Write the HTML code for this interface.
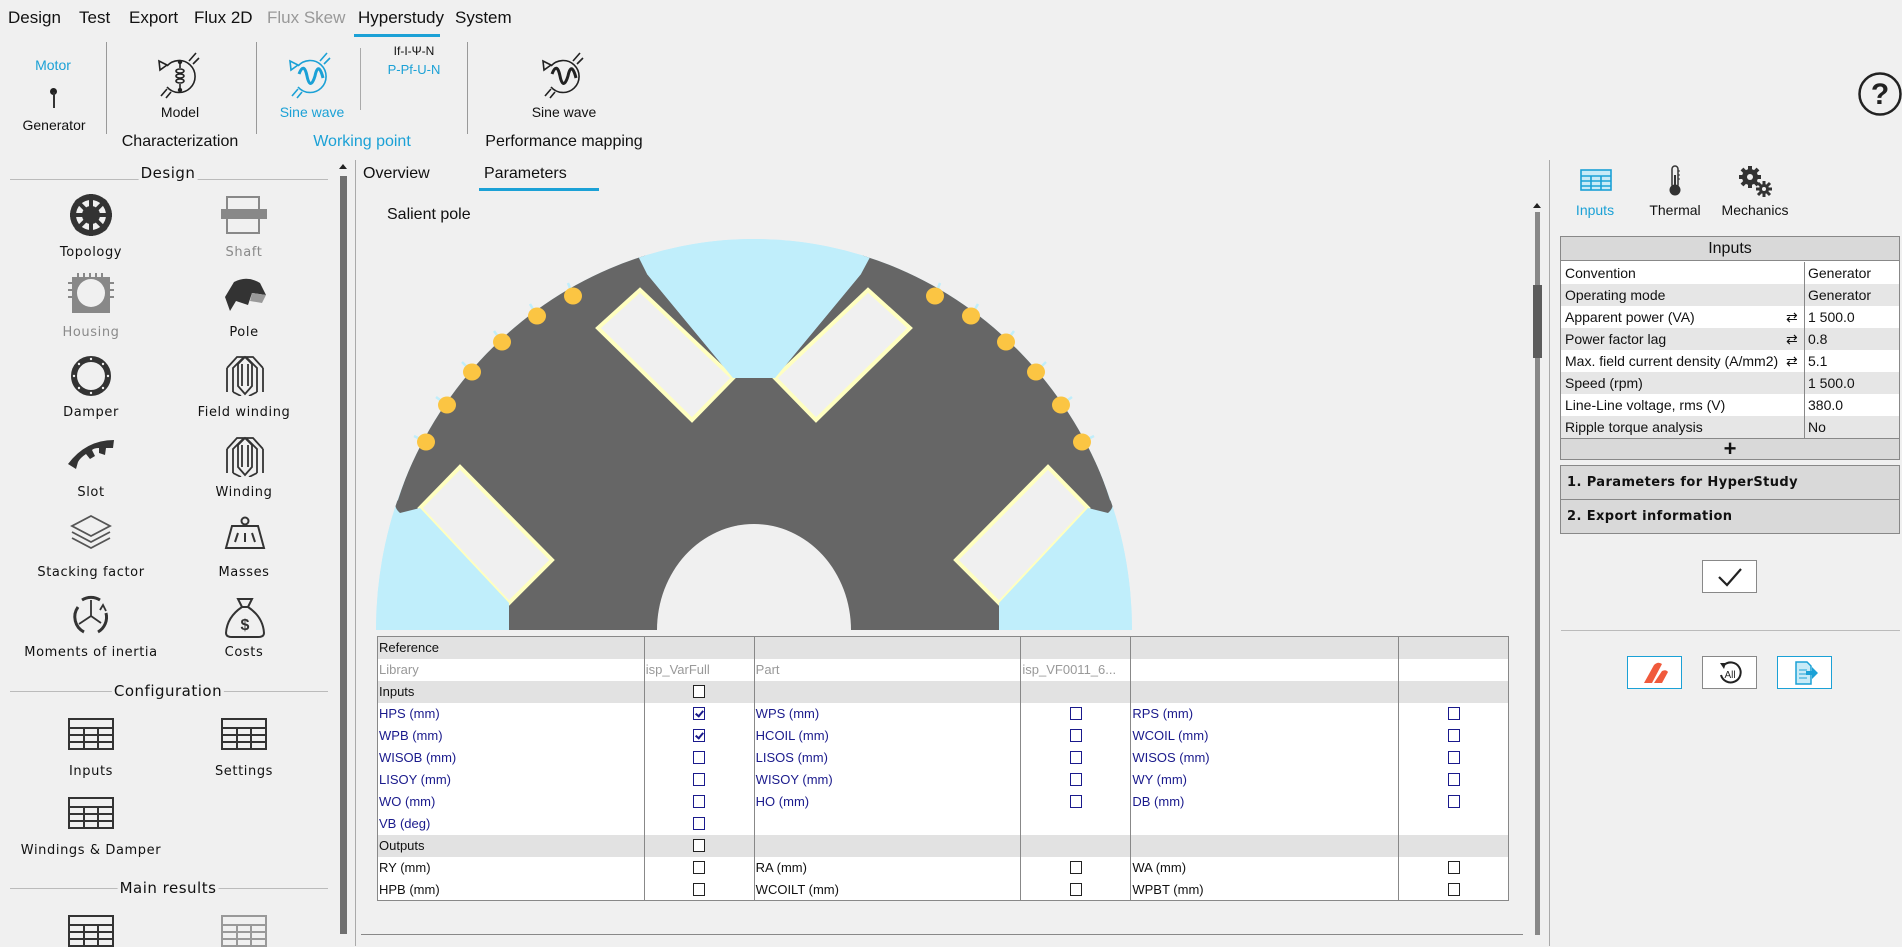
<!DOCTYPE html>
<html><head><meta charset="utf-8">
<style>
*{margin:0;padding:0;box-sizing:border-box}
body{width:1902px;height:946px;background:#f0f0f0;position:relative;overflow:hidden;font-family:"Liberation Sans",sans-serif;color:#111}
.a{position:absolute;white-space:nowrap}
.m{font-size:17px;top:8px}
.c{transform:translateX(-50%)}
.lp{font-family:"DejaVu Sans",sans-serif;font-size:13px;letter-spacing:0.6px;transform:translateX(-50%)}
.hd{font-family:"DejaVu Sans",sans-serif;font-size:15px;letter-spacing:0.5px;transform:translateX(-50%);background:#f0f0f0;padding:0 2px}
.blue{color:#1ba1d6}
.gray{color:#8a8a8a}
table{border-collapse:collapse}
#pt{position:absolute;left:377px;top:636px;width:1132px;font-size:13px;border:1px solid #888}
#pt td{height:22px;padding:0 1px;border-left:1px solid #888;border-right:1px solid #888;vertical-align:middle}
#pt tr.g td{background:#e2e2e2}
#pt tr.w td{background:#fff}
.b{color:#1a1a8c}
.cb{display:block;margin:0 auto;width:12px;height:13px;border:1px solid #1a1a8c;background:#fff;position:relative}
.cb.k{border-color:#222}
.cb.v::after{content:"";position:absolute;left:3px;top:1px;width:3px;height:6px;border-right:2px solid #1a1a8c;border-bottom:2px solid #1a1a8c;transform:rotate(40deg)}
.rr{position:absolute;left:1561px;width:338px;height:22px;font-size:14px;line-height:22px}
.rr span{position:absolute;left:4px}
.rr i{position:absolute;left:243px;top:0;bottom:0;border-left:1px solid #888;padding-left:3px;font-style:normal}
.rr b{position:absolute;left:225px;font-weight:normal}
</style></head><body>

<div class="a m" style="left:8px">Design</div>
<div class="a m" style="left:79px">Test</div>
<div class="a m" style="left:129px">Export</div>
<div class="a m" style="left:194px">Flux 2D</div>
<div class="a m" style="left:267px;color:#999">Flux Skew</div>
<div class="a m" style="left:358px">Hyperstudy</div>
<div class="a m" style="left:455px">System</div>
<div class="a" style="left:354px;top:34px;width:86px;height:3px;background:#1ba1d6"></div>

<div class="a blue c" style="left:53px;top:57px;font-size:14px">Motor</div>
<div class="a" style="left:50px;top:88px;width:7px;height:7px;border-radius:50%;background:#222"></div>
<div class="a" style="left:53px;top:92px;width:1.5px;height:16px;background:#333"></div>
<div class="a c" style="left:54px;top:117px;font-size:14px">Generator</div>
<div class="a" style="left:106px;top:42px;width:1px;height:92px;background:#999"></div>

<svg class="a" style="left:155px;top:50px" width="50" height="50" viewBox="0 0 50 50" fill="none" stroke="#222" stroke-width="1.6">
<path d="M12 16 A16 16 0 1 1 12 37"/><path d="M4 11 L12 15 L5 20 Z"/><path d="M34 11 L41 3 M38 14 L44 8 M12 39 L6 46 M16 42 L11 48"/>
<path d="M25 12 V18 M25 34 V40"/><ellipse cx="25" cy="21" rx="4" ry="2"/><ellipse cx="25" cy="26" rx="4" ry="2"/><ellipse cx="25" cy="31" rx="4" ry="2"/>
<circle cx="25" cy="12" r="1.4" fill="#222"/><circle cx="25" cy="40" r="1.4" fill="#222"/></svg>
<div class="a c" style="left:180px;top:104px;font-size:14px">Model</div>
<div class="a c" style="left:180px;top:133px;font-size:16px">Characterization</div>
<div class="a" style="left:256px;top:42px;width:1px;height:92px;background:#999"></div>

<svg class="a" style="left:286px;top:50px" width="50" height="50" viewBox="0 0 50 50" fill="none" stroke="#1ba1d6" stroke-width="1.6">
<path d="M12 16 A16 16 0 1 1 12 37"/><path d="M4 11 L12 15 L5 20 Z"/><path d="M34 11 L41 3 M38 14 L44 8 M12 39 L6 46 M16 42 L11 48"/>
<path d="M13 24 C16 16 19 16 21 26 C23 36 26 36 29 26 C31 16 34 16 37 28" stroke-width="3"/></svg>
<div class="a c blue" style="left:312px;top:104px;font-size:14px">Sine wave</div>
<div class="a" style="left:360px;top:48px;width:1px;height:62px;background:#aaa"></div>
<div class="a c" style="left:414px;top:44px;font-size:12px">If-I-Ψ-N</div>
<div class="a c blue" style="left:414px;top:62px;font-size:13px">P-Pf-U-N</div>
<div class="a c blue" style="left:362px;top:133px;font-size:16px">Working point</div>
<div class="a" style="left:467px;top:42px;width:1px;height:92px;background:#999"></div>

<svg class="a" style="left:539px;top:50px" width="50" height="50" viewBox="0 0 50 50" fill="none" stroke="#222" stroke-width="1.6">
<path d="M12 16 A16 16 0 1 1 12 37"/><path d="M4 11 L12 15 L5 20 Z"/><path d="M34 11 L41 3 M38 14 L44 8 M12 39 L6 46 M16 42 L11 48"/>
<path d="M13 24 C16 16 19 16 21 26 C23 36 26 36 29 26 C31 16 34 16 37 28" stroke-width="3"/></svg>
<div class="a c" style="left:564px;top:104px;font-size:14px">Sine wave</div>
<div class="a c" style="left:564px;top:133px;font-size:16px">Performance mapping</div>

<svg class="a" style="left:1857px;top:71px" width="46" height="46" viewBox="0 0 46 46"><circle cx="23" cy="23" r="20.5" fill="none" stroke="#222" stroke-width="2.5"/><text x="23" y="33" text-anchor="middle" font-family="Liberation Sans" font-weight="bold" font-size="30" fill="#222">?</text></svg>

<div class="a" style="left:10px;top:179px;width:318px;height:1px;background:#bbb"></div>
<div class="a hd" style="left:168px;top:164px">Design</div>
<div class="a" style="left:340px;top:176px;width:7px;height:758px;background:#707070"></div>
<div class="a" style="left:339px;top:164px;width:0;height:0;border-left:4px solid transparent;border-right:4px solid transparent;border-bottom:5px solid #222"></div>

<svg class="a" style="left:68px;top:192px" width="46" height="46" viewBox="0 0 46 46"><circle cx="23" cy="23" r="21" fill="#333"/><circle cx="23" cy="23" r="15" fill="#f0f0f0"/><g stroke="#333" stroke-width="4"><path d="M23 2V44M2 23H44M8 8L38 38M38 8L8 38"/></g><circle cx="23" cy="23" r="9" fill="#333"/></svg>
<div class="a lp" style="left:91px;top:245px">Topology</div>
<svg class="a" style="left:221px;top:195px" width="46" height="40" viewBox="0 0 46 40"><rect x="6" y="2" width="32" height="36" fill="none" stroke="#888" stroke-width="2"/><rect x="0" y="14" width="46" height="10" fill="#888"/></svg>
<div class="a lp gray" style="left:244px;top:245px">Shaft</div>

<svg class="a" style="left:68px;top:273px" width="46" height="44" viewBox="0 0 46 44"><rect x="4" y="4" width="38" height="36" fill="#888"/><circle cx="23" cy="20" r="14" fill="#f0f0f0"/><rect x="8" y="34" width="30" height="6" fill="#888"/><g stroke="#888" stroke-width="2"><path d="M10 0V4M16 0V4M22 0V4M28 0V4M34 0V4M0 10H4M0 17H4M0 24H4M42 10H46M42 17H46M42 24H46"/></g></svg>
<div class="a lp gray" style="left:91px;top:325px">Housing</div>
<svg class="a" style="left:222px;top:277px" width="46" height="40" viewBox="0 0 46 40"><path d="M3 20 L12 5 Q25 -2 38 6 L44 18 L30 16 L26 28 L14 24 L8 34 Z" fill="#333"/><path d="M30 16 L44 18 L40 26 L28 24Z" fill="#999"/></svg>
<div class="a lp" style="left:244px;top:325px">Pole</div>

<svg class="a" style="left:70px;top:355px" width="42" height="42" viewBox="0 0 42 42"><circle cx="21" cy="21" r="17" fill="none" stroke="#333" stroke-width="6"/><g fill="#f0f0f0"><circle cx="21" cy="4" r="1.2"/><circle cx="21" cy="38" r="1.2"/><circle cx="4" cy="21" r="1.2"/><circle cx="38" cy="21" r="1.2"/><circle cx="9" cy="9" r="1.2"/><circle cx="33" cy="33" r="1.2"/><circle cx="33" cy="9" r="1.2"/><circle cx="9" cy="33" r="1.2"/></g></svg>
<div class="a lp" style="left:91px;top:405px">Damper</div>
<svg class="a" style="left:224px;top:354px" width="42" height="42" viewBox="0 0 42 42" fill="none" stroke="#333" stroke-width="1.8"><path d="M3 14 L13 3 L20 3 L9 14 V38 M39 14 L29 3 L22 3 L33 14 V38 M9 38 L17 42 M33 38 L25 42"/><path d="M14 10 L21 3 L28 10 V32 L21 40 L14 32Z M18 10 V32 M24 10 V32"/><path d="M3 14 V38"/><path d="M39 14 V38"/></svg>
<div class="a lp" style="left:244px;top:405px">Field winding</div>

<svg class="a" style="left:68px;top:436px" width="46" height="36" viewBox="0 0 46 36"><path d="M0 28 Q18 4 46 4 L45 12 L38 12 L37 19 L31 17 L31 12 Q26 12 24 14 L27 20 L22 23 L18 18 Q12 22 10 26 L8 33 Z" fill="#333"/></svg>
<div class="a lp" style="left:91px;top:485px">Slot</div>
<svg class="a" style="left:224px;top:435px" width="42" height="42" viewBox="0 0 42 42" fill="none" stroke="#333" stroke-width="1.8"><path d="M3 14 L13 3 L20 3 L9 14 V38 M39 14 L29 3 L22 3 L33 14 V38 M9 38 L17 42 M33 38 L25 42"/><path d="M14 10 L21 3 L28 10 V32 L21 40 L14 32Z M18 10 V32 M24 10 V32"/><path d="M3 14 V38"/><path d="M39 14 V38"/></svg>
<div class="a lp" style="left:244px;top:485px">Winding</div>

<svg class="a" style="left:70px;top:514px" width="42" height="40" viewBox="0 0 42 40" fill="none" stroke="#555" stroke-width="1.8"><path d="M21 2 L40 12 L21 22 L2 12Z"/><path d="M2 18 L21 28 L40 18"/><path d="M2 24 L21 34 L40 24"/></svg>
<div class="a lp" style="left:91px;top:565px">Stacking factor</div>
<svg class="a" style="left:224px;top:516px" width="42" height="36" viewBox="0 0 42 36" fill="none" stroke="#333" stroke-width="2"><circle cx="21" cy="5" r="3.5"/><path d="M8 10 H34 L40 32 H2Z M14 17 L11 26 M21 17 V26 M28 17 L31 26"/></svg>
<div class="a lp" style="left:244px;top:565px">Masses</div>

<svg class="a" style="left:70px;top:595px" width="42" height="42" viewBox="0 0 42 42" fill="none" stroke="#333" stroke-width="3"><path d="M8 12 A17 17 0 0 0 14 37"/><path d="M28 37 A17 17 0 0 0 36 18"/><path d="M12 5 A17 17 0 0 1 30 5"/><path d="M21 5 V21 L9 29 M21 21 L31 28" stroke-width="1.8"/><path d="M30 15 L33 10 L36 16" stroke-width="1.8"/></svg>
<div class="a lp" style="left:91px;top:645px">Moments of inertia</div>
<svg class="a" style="left:224px;top:595px" width="42" height="44" viewBox="0 0 42 44" fill="none" stroke="#333" stroke-width="2"><path d="M14 4 H28 L24 12 H18Z"/><path d="M18 12 Q3 22 2 38 Q2 42 8 42 H34 Q40 42 40 38 Q39 22 24 12"/><text x="21" y="35" text-anchor="middle" font-family="Liberation Sans" font-weight="bold" font-size="16" fill="#333" stroke="none">$</text></svg>
<div class="a lp" style="left:244px;top:645px">Costs</div>

<div class="a" style="left:10px;top:691px;width:318px;height:1px;background:#bbb"></div>
<div class="a hd" style="left:168px;top:682px">Configuration</div>
<svg class="a" style="left:68px;top:718px" width="46" height="32" viewBox="0 0 46 32" fill="none" stroke="#333" stroke-width="2"><rect x="1" y="1" width="44" height="30"/><path d="M1 10H45M1 17H45M1 24H45M16 10V31M30 10V31"/></svg>
<div class="a lp" style="left:91px;top:764px">Inputs</div>
<svg class="a" style="left:221px;top:718px" width="46" height="32" viewBox="0 0 46 32" fill="none" stroke="#333" stroke-width="2"><rect x="1" y="1" width="44" height="30"/><path d="M1 10H45M1 17H45M1 24H45M16 10V31M30 10V31"/></svg>
<div class="a lp" style="left:244px;top:764px">Settings</div>
<svg class="a" style="left:68px;top:797px" width="46" height="32" viewBox="0 0 46 32" fill="none" stroke="#333" stroke-width="2"><rect x="1" y="1" width="44" height="30"/><path d="M1 10H45M1 17H45M1 24H45M16 10V31M30 10V31"/></svg>
<div class="a lp" style="left:91px;top:843px">Windings &amp; Damper</div>
<div class="a" style="left:10px;top:888px;width:318px;height:1px;background:#bbb"></div>
<div class="a hd" style="left:168px;top:879px">Main results</div>
<svg class="a" style="left:68px;top:915px" width="46" height="32" viewBox="0 0 46 32" fill="none" stroke="#333" stroke-width="2"><rect x="1" y="1" width="44" height="30"/><path d="M1 10H45M1 17H45M1 24H45M16 10V31M30 10V31"/></svg>
<svg class="a" style="left:221px;top:915px" width="46" height="32" viewBox="0 0 46 32" fill="none" stroke="#999" stroke-width="2"><rect x="1" y="1" width="44" height="30"/><path d="M1 10H45M1 17H45M1 24H45M16 10V31M30 10V31"/></svg>

<div class="a" style="left:355px;top:160px;width:1px;height:786px;background:#aaa"></div>
<div class="a" style="left:363px;top:165px;font-size:16px">Overview</div>
<div class="a" style="left:484px;top:165px;font-size:16px">Parameters</div>
<div class="a" style="left:479px;top:188px;width:120px;height:3px;background:#1ba1d6"></div>
<div class="a" style="left:387px;top:206px;font-size:16px">Salient pole</div>

<svg class="a" style="left:370px;top:190px" width="780" height="450" viewBox="0 0 780 450">
<defs><clipPath id="e"><path d="M6 440 A378 391 0 0 1 762 440Z"/></clipPath></defs>
<path d="M6 440 A378 391 0 0 1 762 440Z" fill="#c0eefb"/>
<g clip-path="url(#e)">
<path d="M139 440 V413 L50 318 Q40 330 30 323 Q22 316 28 310 A376 402 0 0 1 262 60 Q284 62 277 84 L363 188 H405 L491 84 Q484 62 506 60 A376 402 0 0 1 740 310 Q746 316 738 323 Q728 330 718 318 L629 413 V440Z" fill="#666"/>
</g>
<g fill="#f0f0f0" stroke="#ffffc0" stroke-width="4">
<path d="M270 100 L228 138 L322 230 L363 188Z"/><path d="M498 100 L540 138 L446 230 L405 188Z"/>
<path d="M50 318 L90 277 L182 370 L139 413Z"/><path d="M718 318 L678 277 L586 370 L629 413Z"/></g>
<g clip-path="url(#e)" fill="#c0eefb">
<path d="M277 84 L363 188 H405 L491 84 L520 30 L250 30Z"/>
<path d="M50 318 L139 413 V442 H0 V330 L30 323Z"/>
<path d="M718 318 L629 413 V442 H770 V330 L738 323Z"/>
</g>
<ellipse cx="384" cy="440" rx="97" ry="106" fill="#f0f0f0"/>
<rect x="0" y="440" width="780" height="10" fill="#f0f0f0"/>
<g stroke="#c0eefb" stroke-width="2.5"><path d="M203 106 L198 93 M167 126 L160 114 M132 152 L124 141 M102 182 L92 172 M77 215 L66 207 M56 252 L44 246 M565 106 L570 93 M601 126 L608 114 M636 152 L644 141 M666 182 L676 172 M691 215 L702 207 M712 252 L724 246"/></g>
<g fill="#fbc543"><ellipse cx="203" cy="106" rx="9" ry="8.5"/><ellipse cx="167" cy="126" rx="9" ry="8.5"/><ellipse cx="132" cy="152" rx="9" ry="8.5"/><ellipse cx="102" cy="182" rx="9" ry="8.5"/><ellipse cx="77" cy="215" rx="9" ry="8.5"/><ellipse cx="56" cy="252" rx="9" ry="8.5"/>
<ellipse cx="565" cy="106" rx="9" ry="8.5"/><ellipse cx="601" cy="126" rx="9" ry="8.5"/><ellipse cx="636" cy="152" rx="9" ry="8.5"/><ellipse cx="666" cy="182" rx="9" ry="8.5"/><ellipse cx="691" cy="215" rx="9" ry="8.5"/><ellipse cx="712" cy="252" rx="9" ry="8.5"/></g>
</svg>

<table id="pt">
<colgroup><col style="width:267px"><col style="width:110px"><col style="width:267px"><col style="width:110px"><col style="width:268px"><col style="width:110px"></colgroup>
<tr class="g"><td>Reference</td><td></td><td></td><td></td><td></td><td></td></tr>
<tr class="w" style="color:#999"><td>Library</td><td>isp_VarFull</td><td>Part</td><td>isp_VF0011_6...</td><td></td><td></td></tr>
<tr class="g"><td>Inputs</td><td><span class="cb k"></span></td><td></td><td></td><td></td><td></td></tr>
<tr class="w b"><td>HPS (mm)</td><td><span class="cb v"></span></td><td>WPS (mm)</td><td><span class="cb"></span></td><td>RPS (mm)</td><td><span class="cb"></span></td></tr>
<tr class="w b"><td>WPB (mm)</td><td><span class="cb v"></span></td><td>HCOIL (mm)</td><td><span class="cb"></span></td><td>WCOIL (mm)</td><td><span class="cb"></span></td></tr>
<tr class="w b"><td>WISOB (mm)</td><td><span class="cb"></span></td><td>LISOS (mm)</td><td><span class="cb"></span></td><td>WISOS (mm)</td><td><span class="cb"></span></td></tr>
<tr class="w b"><td>LISOY (mm)</td><td><span class="cb"></span></td><td>WISOY (mm)</td><td><span class="cb"></span></td><td>WY (mm)</td><td><span class="cb"></span></td></tr>
<tr class="w b"><td>WO (mm)</td><td><span class="cb"></span></td><td>HO (mm)</td><td><span class="cb"></span></td><td>DB (mm)</td><td><span class="cb"></span></td></tr>
<tr class="w b"><td>VB (deg)</td><td><span class="cb"></span></td><td></td><td></td><td></td><td></td></tr>
<tr class="g"><td>Outputs</td><td><span class="cb k"></span></td><td></td><td></td><td></td><td></td></tr>
<tr class="w"><td>RY (mm)</td><td><span class="cb k"></span></td><td>RA (mm)</td><td><span class="cb k"></span></td><td>WA (mm)</td><td><span class="cb k"></span></td></tr>
<tr class="w"><td>HPB (mm)</td><td><span class="cb k"></span></td><td>WCOILT (mm)</td><td><span class="cb k"></span></td><td>WPBT (mm)</td><td><span class="cb k"></span></td></tr>
</table>
<div class="a" style="left:361px;top:934px;width:1162px;height:1px;background:#888"></div>

<div class="a" style="left:1535px;top:212px;width:5px;height:723px;background:#888"></div>
<div class="a" style="left:1533px;top:285px;width:9px;height:73px;background:#5c5c5c"></div>
<div class="a" style="left:1533px;top:203px;border-left:4px solid transparent;border-right:4px solid transparent;border-bottom:5px solid #222"></div>
<div class="a" style="left:1549px;top:160px;width:1px;height:786px;background:#aaa"></div>

<svg class="a" style="left:1580px;top:169px" width="32" height="22" viewBox="0 0 32 22" fill="#c8ebf7" stroke="#1ba1d6" stroke-width="1.6"><rect x="1" y="1" width="30" height="20"/><path d="M1 7H31M1 12H31M1 17H31M11 7V21M21 7V21" fill="none"/></svg>
<div class="a c blue" style="left:1595px;top:202px;font-size:14px">Inputs</div>
<svg class="a" style="left:1667px;top:165px" width="16" height="32" viewBox="0 0 16 32"><rect x="5" y="1" width="6" height="22" rx="3" fill="none" stroke="#333" stroke-width="1.5"/><circle cx="8" cy="25" r="5.5" fill="#333"/><rect x="7" y="10" width="2" height="14" fill="#333"/><path d="M11 6H13M11 10H13M11 14H13" stroke="#333"/></svg>
<div class="a c" style="left:1675px;top:202px;font-size:14px">Thermal</div>
<svg class="a" style="left:1738px;top:165px" width="34" height="32" viewBox="0 0 34 32" fill="#333"><circle cx="12" cy="12" r="8"/><g stroke="#333" stroke-width="4"><path d="M12 1V23M1 12H23M4 4L20 20M20 4L4 20"/></g><circle cx="12" cy="12" r="3" fill="#f0f0f0"/><circle cx="26" cy="24" r="5"/><g stroke="#333" stroke-width="3"><path d="M26 16V32M18 24H34M20 18L32 30M32 18L20 30"/></g><circle cx="26" cy="24" r="2" fill="#f0f0f0"/></svg>
<div class="a c" style="left:1755px;top:202px;font-size:14px">Mechanics</div>

<div class="a" style="left:1560px;top:236px;width:340px;height:203px;border:1px solid #888;background:#fff"></div>
<div class="a" style="left:1561px;top:237px;width:338px;height:24px;background:#d9d9d9;border-bottom:1px solid #888;font-size:16px;text-align:center;line-height:24px">Inputs</div>
<div class="rr" style="top:262px;background:#fff"><span>Convention</span><i>Generator</i></div>
<div class="rr" style="top:284px;background:#e6e6e6"><span>Operating mode</span><i>Generator</i></div>
<div class="rr" style="top:306px;background:#fff"><span>Apparent power (VA)</span><b>⇄</b><i>1 500.0</i></div>
<div class="rr" style="top:328px;background:#e6e6e6"><span>Power factor lag</span><b>⇄</b><i>0.8</i></div>
<div class="rr" style="top:350px;background:#fff"><span>Max. field current density (A/mm2)</span><b>⇄</b><i>5.1</i></div>
<div class="rr" style="top:372px;background:#e6e6e6"><span>Speed (rpm)</span><i>1 500.0</i></div>
<div class="rr" style="top:394px;background:#fff"><span>Line-Line voltage, rms (V)</span><i>380.0</i></div>
<div class="rr" style="top:416px;background:#e6e6e6"><span>Ripple torque analysis</span><i>No</i></div>
<div class="a" style="left:1560px;top:438px;width:340px;height:22px;background:#d9d9d9;border:1px solid #888;text-align:center;font-size:22px;font-weight:bold;line-height:19px">+</div>
<div class="a" style="left:1560px;top:465px;width:340px;height:35px;background:#d9d9d9;border:1px solid #888;font-family:'DejaVu Sans',sans-serif;font-weight:bold;font-size:13px;line-height:33px;padding-left:6px;letter-spacing:0.4px">1. Parameters for HyperStudy</div>
<div class="a" style="left:1560px;top:499px;width:340px;height:35px;background:#d9d9d9;border:1px solid #888;font-family:'DejaVu Sans',sans-serif;font-weight:bold;font-size:13px;line-height:33px;padding-left:6px;letter-spacing:0.4px">2. Export information</div>

<div class="a" style="left:1702px;top:560px;width:55px;height:33px;background:#fff;border:1px solid #888"></div>
<svg class="a" style="left:1716px;top:566px" width="28" height="22" viewBox="0 0 28 22"><path d="M3 11 L11 19 L25 3" fill="none" stroke="#222" stroke-width="2.2"/></svg>
<div class="a" style="left:1561px;top:630px;width:339px;height:1px;background:#bbb"></div>

<div class="a" style="left:1627px;top:656px;width:55px;height:33px;background:#fff;border:1.5px solid #1ba1d6"></div>
<svg class="a" style="left:1640px;top:661px" width="30" height="24" viewBox="0 0 30 24"><path d="M4 22 L14 4 Q18 0 22 3 L12 22Z M14 22 L22 10 Q26 8 28 11 L22 22Z" fill="#f05a3c"/></svg>
<div class="a" style="left:1702px;top:656px;width:55px;height:33px;background:#fff;border:1px solid #888"></div>
<svg class="a" style="left:1716px;top:660px" width="28" height="26" viewBox="0 0 28 26"><path d="M8 5 A10 10 0 1 1 5 15" fill="none" stroke="#222" stroke-width="2"/><path d="M4 3 L10 3 L8 9Z" fill="#222"/><text x="14" y="18" text-anchor="middle" font-family="Liberation Sans" font-size="10" fill="#222">All</text></svg>
<div class="a" style="left:1777px;top:656px;width:55px;height:33px;background:#fff;border:1.5px solid #1ba1d6"></div>
<svg class="a" style="left:1793px;top:660px" width="26" height="26" viewBox="0 0 26 26"><path d="M3 2H14L18 6V24H3Z" fill="#c8ebf7" stroke="#1ba1d6" stroke-width="1.5"/><path d="M6 10H14M6 14H14M6 18H14" stroke="#1ba1d6"/><path d="M13 11H19V7L25 13L19 19V15H13Z" fill="#1ba1d6"/></svg>
</body></html>
